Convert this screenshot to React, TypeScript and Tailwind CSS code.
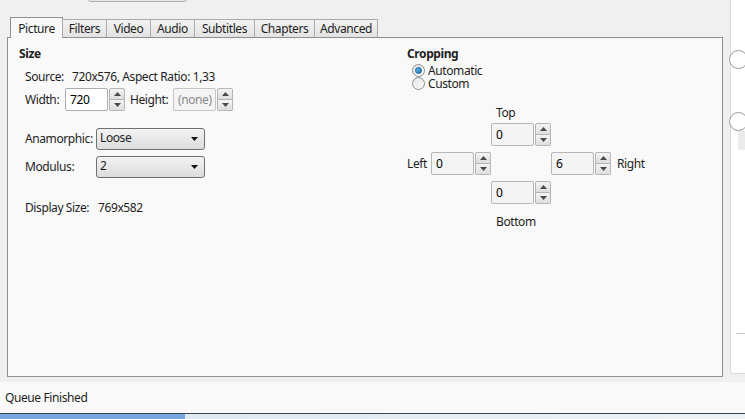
import React from "react";

const Arrow = ({ up }: { up?: boolean }) => (
  <svg width="7" height="4" viewBox="0 0 7 4" className="block">
    {up ? <polygon points="0,4 7,4 3.5,0" fill="#4a4a4a" /> : <polygon points="0,0 7,0 3.5,4" fill="#4a4a4a" />}
  </svg>
);

const Spinner = () => (
  <div className="flex flex-col w-[16px] h-[23px] ml-px">
    <div className="flex-1 flex items-center justify-center border border-[#b5b5b5] rounded-t-[2px] bg-gradient-to-b from-[#f4f4f4] to-[#dedede]">
      <Arrow up />
    </div>
    <div className="flex-1 flex items-center justify-center border border-t-0 border-[#b5b5b5] rounded-b-[2px] bg-gradient-to-b from-[#f4f4f4] to-[#dedede]">
      <Arrow />
    </div>
  </div>
);

const SpinBox = ({ value, white, disabled }: { value: string; white?: boolean; disabled?: boolean }) => (
  <div className="flex items-center">
    <div
      className={
        "w-[43px] h-[23px] border rounded-[2px] flex items-center pl-[4px] " +
        (white ? "bg-white border-[#abadb3] text-black" : disabled ? "bg-[#f4f4f4] border-[#c5c5c5] text-[#8a8a8a]" : "bg-[#f4f4f4] border-[#b7b7b7] text-black")
      }
    >
      {value}
    </div>
    <Spinner />
  </div>
);

const Combo = ({ value }: { value: string }) => (
  <div className="w-[109px] h-[22px] border border-[#707070] rounded-[3px] bg-gradient-to-b from-[#f3f3f3] to-[#dcdcdc] flex items-center justify-between pl-[3px] pr-[6px]">
    <span className="leading-none -mt-[3px]">{value}</span>
    <svg width="7" height="4" viewBox="0 0 7 4"><polygon points="0,0 7,0 3.5,4" fill="#111" /></svg>
  </div>
);

const Radio = ({ checked, label }: { checked?: boolean; label: string }) => (
  <div className="flex items-center h-[13px] gap-[3px]">
    <div className="w-[13px] h-[13px] rounded-full border border-[#8f8f8f] bg-gradient-to-br from-[#e6e6e6] to-[#fafafa] flex items-center justify-center">
      {checked && <div className="w-[7px] h-[7px] rounded-full bg-gradient-to-br from-[#6fc3f0] to-[#1a6eb5] border border-[#0f5a99]" />}
    </div>
    <span className="leading-[13px]">{label}</span>
  </div>
);

const tabs = ["Filters", "Video", "Audio", "Subtitles", "Chapters", "Advanced"];
const tabW = [45, 45, 45, 61, 61, 64];

export default function App() {
  return (
    <div
      className="w-[745px] h-[419px] bg-[#f0f0f0] overflow-hidden text-[12px] tracking-[-0.4px] text-[#1e1e1e] flex flex-col"
      style={{ fontFamily: '"Noto Sans", "Open Sans", sans-serif' }}
    >
      <div className="flex h-[377px]">
        <div className="w-[723px] flex flex-col pl-[7px]">
          <div className="h-[17px] relative">
            <div className="ml-[81px] w-[99px] h-[12px] -mt-[10px] border border-[#adadad] rounded-[3px] bg-[#e6e6e6]" />
          </div>
          <div className="flex items-end ml-[3px] h-[20px] relative z-10">
            <div className="w-[53px] border border-b-0 border-[#8e8f8f] bg-[#f9f9f9] flex items-center justify-center pt-[1px] mb-[-1px] h-[21px]">
              Picture
            </div>
            {tabs.map((t, i) => (
              <div
                key={t}
                style={{ width: tabW[i] }}
                className="h-[18px] -ml-px border border-b-0 border-[#acacac] bg-gradient-to-b from-[#f2f2f2] to-[#e3e3e3] flex items-center justify-center"
              >
                {t}
              </div>
            ))}
          </div>
          <div className="flex-1 border border-[#8e8f8f] bg-[#f9f9f9] flex pl-[11px] pt-[8px]">
            <div className="w-[388px] flex flex-col">
              <div className="font-bold h-[16px] leading-[16px]">Size</div>
              <div className="pl-[6px] flex flex-col">
                <div className="mt-[7px] h-[16px] leading-[16px] flex">
                  <span className="w-[47px]">Source:</span>
                  <span>720x576, Aspect Ratio: 1,33</span>
                </div>
                <div className="mt-[3px] flex items-center h-[23px]">
                  <span className="w-[40px]">Width:</span>
                  <SpinBox value="720" white />
                  <span className="ml-[5px] w-[43px]">Height:</span>
                  <SpinBox value="(none)" disabled />
                </div>
                <div className="mt-[17px] flex items-center h-[22px]">
                  <span className="w-[71px]">Anamorphic:</span>
                  <Combo value="Loose" />
                </div>
                <div className="mt-[6px] flex items-center h-[22px]">
                  <span className="w-[71px]">Modulus:</span>
                  <Combo value="2" />
                </div>
                <div className="mt-[22px] h-[16px] leading-[16px] flex">
                  <span className="w-[73px]">Display Size:</span>
                  <span>769x582</span>
                </div>
              </div>
            </div>
            <div className="flex flex-col">
              <div className="font-bold h-[16px] leading-[16px]">Cropping</div>
              <div className="pl-[5px] mt-[2px] flex flex-col">
                <Radio checked label="Automatic" />
                <Radio label="Custom" />
              </div>
              <div className="mt-[15px] flex flex-col">
                <div className="ml-[89px] h-[16px] leading-[16px]">Top</div>
                <div className="ml-[84px] mt-[2px]"><SpinBox value="0" /></div>
                <div className="flex items-center mt-[6px]">
                  <span className="w-[24px]">Left</span>
                  <SpinBox value="0" />
                  <div className="w-[60px]" />
                  <SpinBox value="6" />
                  <span className="ml-[6px]">Right</span>
                </div>
                <div className="ml-[84px] mt-[6px]"><SpinBox value="0" /></div>
                <div className="ml-[89px] mt-[10px] h-[16px] leading-[16px]">Bottom</div>
              </div>
            </div>
          </div>
        </div>
        <div className="flex-1 relative">
          <div className="absolute left-[7px] top-0 bottom-[3px] right-0 bg-white border-l border-b border-[#d5dde6] rounded-bl-[3px]">
            <div className="absolute left-[5px] right-0 top-[333px] h-px bg-[#c8c8c8]" />
            <div className="absolute left-[7px] right-0 top-[131px] h-[19px] bg-[#ebebeb]" />
          </div>
          <div className="absolute left-[6px] top-[50px] w-[19px] h-[19px] rounded-full border border-[#9a9a9a] bg-white" />
          <div className="absolute left-[6px] top-[112px] w-[19px] h-[19px] rounded-full border border-[#9a9a9a] bg-white" />
        </div>
      </div>
      <div className="h-[5px]" />
      <div className="h-[31px] bg-[#f9f9f9] flex items-center pl-[5px]">Queue Finished</div>
      <div className="h-px bg-[#3c4650]" />
      <div className="flex-1 flex">
        <div className="w-[185px] bg-[#76a6dc]" />
        <div className="flex-1 bg-gradient-to-r from-[#dfe9f2] to-[#eef2f5]" />
      </div>
    </div>
  );
}
